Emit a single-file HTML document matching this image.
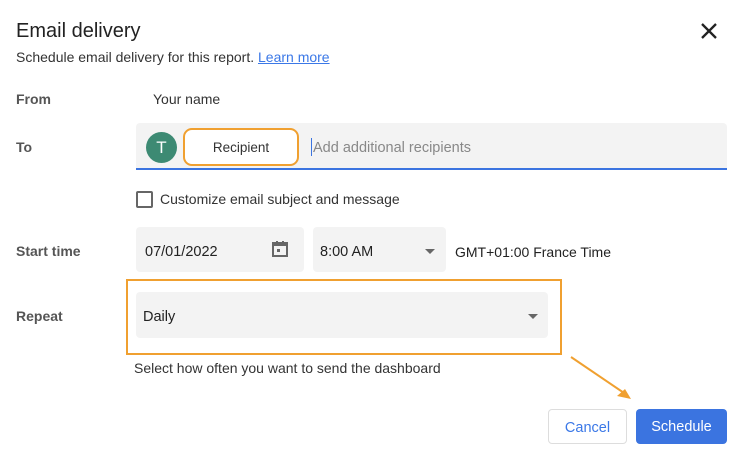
<!DOCTYPE html>
<html><head><style>
body{margin:0;width:748px;height:459px;background:#fff;font-family:"Liberation Sans",sans-serif;position:relative;overflow:hidden;color:#222}
.a{position:absolute;white-space:nowrap}
.lbl{font-weight:bold;color:#555;font-size:14px}
.fld{position:absolute;background:#f3f3f3;border-radius:4px}
.tri{position:absolute;width:0;height:0;border-left:5px solid transparent;border-right:5px solid transparent;border-top:5px solid #666}
</style></head><body>
<div class="a" style="left:16px;top:20px;font-size:20px;color:#222">Email delivery</div>
<div class="a" style="left:16px;top:49px;font-size:14px;color:#333">Schedule email delivery for this report. <span style="color:#3b78e7;text-decoration:underline">Learn more</span></div>
<svg class="a" style="left:700px;top:22px" width="18" height="18"><path d="M2 2L16 16M16 2L2 16" stroke="#222" stroke-width="2.3"/></svg>

<div class="a lbl" style="left:16px;top:91px">From</div>
<div class="a" style="left:153px;top:91px;font-size:14px;color:#333">Your name</div>

<div class="a lbl" style="left:16px;top:139px">To</div>
<div class="fld" style="left:136px;top:123px;width:591px;height:45px;border-radius:4px 4px 0 0;border-bottom:2px solid #3b74e0"></div>
<div class="a" style="left:146px;top:132px;width:31px;height:31px;border-radius:50%;background:#3d8a73;color:#fff;font-size:17px;text-align:center;line-height:31px">T</div>
<div class="a" style="left:183px;top:128px;width:112px;height:34px;border:2px solid #f0a030;border-radius:9px;background:#fff;text-align:center;line-height:36px;font-size:13.5px;color:#333">Recipient</div>
<div class="a" style="left:311px;top:138px;width:1px;height:18px;background:#3b74e0"></div>
<div class="a" style="left:313px;top:140px;font-size:14.5px;color:#888">Add additional recipients</div>

<div class="a" style="left:136px;top:191px;width:13px;height:13px;border:2px solid #666;border-radius:2px"></div>
<div class="a" style="left:160px;top:191px;font-size:14px;color:#333">Customize email subject and message</div>

<div class="a lbl" style="left:16px;top:243px">Start time</div>
<div class="fld" style="left:136px;top:227px;width:168px;height:45px"></div>
<div class="a" style="left:145px;top:244px;font-size:14.5px;color:#222">07/01/2022</div>
<svg class="a" style="left:271px;top:240px" width="18" height="18"><rect x="2" y="3" width="14" height="13" fill="none" stroke="#666" stroke-width="2"/><rect x="2" y="3" width="14" height="3" fill="#666"/><rect x="5" y="1" width="2" height="3" fill="#666"/><rect x="11" y="1" width="2" height="3" fill="#666"/><rect x="6" y="9" width="3" height="3" fill="#666"/></svg>
<div class="fld" style="left:313px;top:227px;width:133px;height:45px"></div>
<div class="a" style="left:320px;top:244px;font-size:14.5px;color:#222">8:00 AM</div>
<div class="tri" style="left:425px;top:249px"></div>
<div class="a" style="left:455px;top:244px;font-size:14px;color:#222">GMT+01:00 France Time</div>

<div class="a lbl" style="left:16px;top:308px">Repeat</div>
<div class="a" style="left:126px;top:279px;width:432px;height:72px;border:2px solid #f0a030"></div>
<div class="fld" style="left:136px;top:292px;width:412px;height:46px"></div>
<div class="a" style="left:143px;top:309px;font-size:14.5px;color:#222">Daily</div>
<div class="tri" style="left:528px;top:314px"></div>
<div class="a" style="left:134px;top:360px;font-size:14px;color:#333">Select how often you want to send the dashboard</div>

<svg class="a" style="left:565px;top:352px" width="75" height="52"><path d="M6 5L62 43" stroke="#f0a030" stroke-width="2"/><path d="M66 47L52 44L60 37Z" fill="#f0a030"/></svg>

<div class="a" style="left:548px;top:409px;width:77px;height:33px;border:1px solid #ddd;border-radius:4px;text-align:center;line-height:36px;font-size:14.5px;color:#3b78e7">Cancel</div>
<div class="a" style="left:636px;top:409px;width:91px;height:35px;background:#3b74e0;border-radius:4px;text-align:center;line-height:37px;font-size:14.5px;color:#fff">Schedule</div>
</body></html>
